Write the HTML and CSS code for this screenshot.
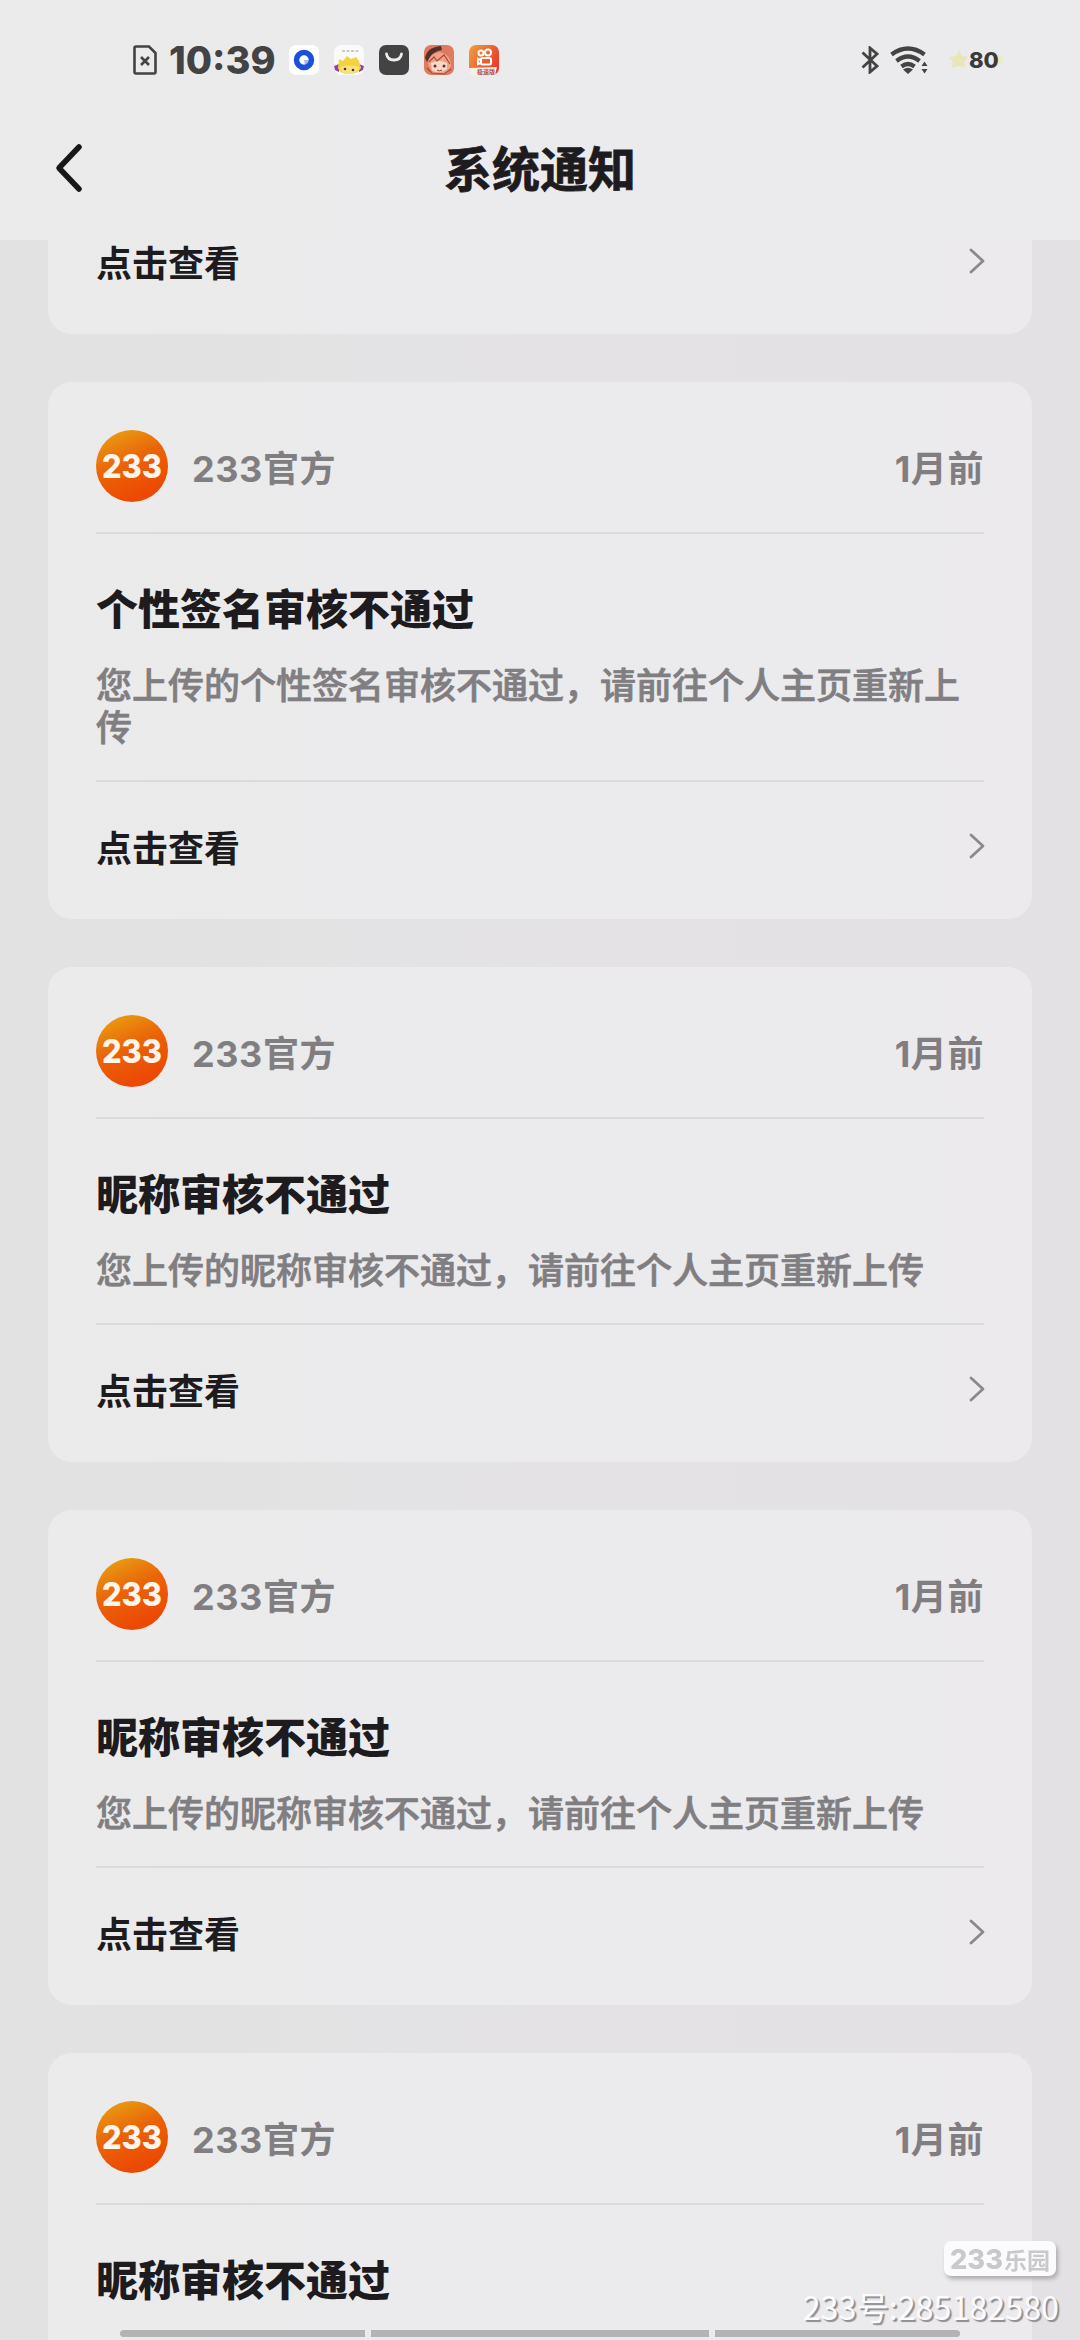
FILE: index.html
```html
<!DOCTYPE html>
<html lang="zh-CN">
<head>
<meta charset="utf-8">
<title>系统通知</title>
<link rel="stylesheet" href="styles.css">
</head>
<body>
<svg class="defs" aria-hidden="true">
  <defs>
    <linearGradient id="orange" x1="0.2" y1="0" x2="0.6" y2="0.9"><stop offset="0" stop-color="#e9a012"/><stop offset=".5" stop-color="#ea6408"/><stop offset="1" stop-color="#ec4a04"/></linearGradient>
    <linearGradient id="video" x1="0" y1="0" x2="1" y2=".6"><stop offset="0" stop-color="#f2a03c"/><stop offset="1" stop-color="#ea3b2c"/></linearGradient>
    <symbol id="chevron" viewBox="0 0 16 26"><path d="M2 2L14 13L2 24" fill="none" stroke="#8b898c" stroke-width="2.8" stroke-linecap="round" stroke-linejoin="round"/></symbol>
    <symbol id="avatar" viewBox="0 0 72 72"><circle cx="36" cy="36" r="36" fill="url(#orange)"/><text x="6" y="47.500" textLength="60" lengthAdjust="spacingAndGlyphs" class="avatar-text">233</text></symbol>
  </defs>
</svg>
<div class="screen">
  <header class="top">
    <div class="status">
      <svg class="doc" viewBox="0 0 24 30"><path d="M3 1.500H16L22.500 8V27Q22.500 28.500 21 28.500H3Q1.500 28.500 1.500 27V3Q1.500 1.500 3 1.500Z" fill="none" stroke="#434343" stroke-width="2.600"/><path d="M8 12L16 20M16 12L8 20" stroke="#434343" stroke-width="2.600"/></svg>
      <span class="time">10:39</span>
      <div class="apps">
        <svg viewBox="0 0 30 30"><rect width="30" height="30" rx="7" fill="#fff"/><circle cx="15" cy="15" r="7.500" fill="none" stroke="#1b50dc" stroke-width="5.500"/><path d="M15 15H20V20H16Z" fill="#1b50dc" opacity=".4"/></svg>
        <svg viewBox="0 0 30 30"><rect width="30" height="30" rx="7" fill="#fafafa"/><path d="M8 6H25" stroke="#c9c9d2" stroke-width="2" stroke-dasharray="3 1.500"/><path d="M0 21L5 19V27L1 25ZM30 21L25 19V27L29 25Z" fill="#8c43b4"/><path d="M5 14L9 16L13 11L17 14L22 12L25 16L27 23Q24 29 15 29Q6 29 4 23Z" fill="#f3d43e"/><path d="M6 22Q15 19 25 22Q23 29 15 29Q7 29 6 22Z" fill="#f8e27c"/><circle cx="11" cy="24" r="1.300" fill="#453438"/><circle cx="19" cy="25" r="1.300" fill="#453438"/></svg>
        <svg viewBox="0 0 30 30"><rect width="30" height="30" rx="7" fill="#434343"/><path d="M7.500 9Q8.500 15 15 15Q21.500 15 22.500 9" fill="none" stroke="#eee" stroke-width="2.800" stroke-linecap="round"/></svg>
        <svg viewBox="0 0 30 30"><rect width="30" height="30" rx="7" fill="#df7a5d"/><path d="M1 13Q3 2 17 1L18 5Q8 6 3 17Z" fill="#54302d"/><path d="M4 19Q5 9 15 7Q27 9 27 21L23 28H8Z" fill="#f2a187"/><path d="M7 18Q15 14 23 18V24Q15 30 8 25Z" fill="#f8d8c8"/><path d="M5 17L10 12L13 16L20 10L26 19M3 23L8 28L20 29L27 24" fill="none" stroke="#a34a3d" stroke-width="1.200"/><circle cx="11" cy="21" r="1.500" fill="#59312d"/><circle cx="20" cy="21" r="1.500" fill="#59312d"/><path d="M13 25Q15 27 18 25" fill="none" stroke="#833e36"/></svg>
        <svg viewBox="0 0 30 30"><rect width="30" height="30" rx="7" fill="url(#video)"/><g fill="none" stroke="#fff" stroke-width="2"><circle cx="12" cy="8" r="2.500"/><circle cx="19" cy="7.500" r="3"/><rect x="12" y="13" width="10" height="6.500" rx="1.500"/><path d="M12 15L9 14V19L12 18"/></g><path d="M0 23L28 22L26 30H5Q0 30 0 23Z" fill="#fbeee8"/><text x="8" y="28.500" class="tiny">极速版</text></svg>
      </div>
      <div class="signals">
        <svg class="bt" viewBox="0 0 18 28"><path d="M1.500 6.500L16 20L9 26V2L16 8L1.500 21.500" fill="none" stroke="#434343" stroke-width="2.800"/></svg>
        <svg class="wifi" viewBox="0 0 39 28"><g fill="none" stroke="#434343" stroke-width="4.200"><path d="M1.500 8.500Q18 -3.500 34.500 8.500"/><path d="M6.500 15Q18 6 29.500 15"/><path d="M11.500 20.500Q18 15.500 24.500 20.500"/></g><path d="M13 23.500Q18 20 23 23.500L18 28Z" fill="#434343"/><path d="M31.500 20L34.500 15.500L37.500 20ZM31.500 23L34.500 27.500L37.500 23Z" fill="#434343"/></svg>
        <div class="battery">
          <svg class="spark" viewBox="0 0 56 24"><path d="M10 2L13 8L19 9L15 14L16 20L10 18L3 20L4 14L0 9L7 8Z" fill="#e8e6b8"/><path d="M51 6L55 11L51 17L48 14V9Z" fill="#ecebc8"/></svg>
          <span class="battery-text">80</span>
        </div>
      </div>
    </div>
    <nav class="nav">
      <svg class="back" viewBox="0 0 30 50"><path d="M26 4L6 25L26 46" fill="none" stroke="#171717" stroke-width="5.500" stroke-linecap="round" stroke-linejoin="round"/></svg>
      <h1 class="page-title">系统通知</h1>
    </nav>
  </header>
  <main class="list">
    <section class="card card-first">
      <div class="action"><span>点击查看</span><svg class="chev"><use href="#chevron"/></svg></div>
    </section>
    <section class="card">
      <div class="sender"><svg class="avatar"><use href="#avatar"/></svg><span class="name">233官方</span><span class="date">1月前</span></div>
      <div class="message"><h2>个性签名审核不通过</h2><p>您上传的个性签名审核不通过，请前往个人主页重新上传</p></div>
      <div class="action"><span>点击查看</span><svg class="chev"><use href="#chevron"/></svg></div>
    </section>
    <section class="card">
      <div class="sender"><svg class="avatar"><use href="#avatar"/></svg><span class="name">233官方</span><span class="date">1月前</span></div>
      <div class="message"><h2>昵称审核不通过</h2><p>您上传的昵称审核不通过，请前往个人主页重新上传</p></div>
      <div class="action"><span>点击查看</span><svg class="chev"><use href="#chevron"/></svg></div>
    </section>
    <section class="card">
      <div class="sender"><svg class="avatar"><use href="#avatar"/></svg><span class="name">233官方</span><span class="date">1月前</span></div>
      <div class="message"><h2>昵称审核不通过</h2><p>您上传的昵称审核不通过，请前往个人主页重新上传</p></div>
      <div class="action"><span>点击查看</span><svg class="chev"><use href="#chevron"/></svg></div>
    </section>
    <section class="card card-last">
      <div class="sender"><svg class="avatar"><use href="#avatar"/></svg><span class="name">233官方</span><span class="date">1月前</span></div>
      <div class="message"><h2>昵称审核不通过</h2></div>
    </section>
  </main>
  <div class="gesture"><i></i><i></i><i></i></div>
  <div class="stamp">
    <svg class="stamp-logo" viewBox="0 0 112 35"><rect width="112" height="35" rx="7" fill="#fbfafc"/><text x="6" y="28" textLength="53" lengthAdjust="spacingAndGlyphs" class="stamp-num">233</text><text x="60" y="27.500" textLength="46" lengthAdjust="spacingAndGlyphs" class="stamp-cn">乐园</text></svg>
    <span class="stamp-id">233号:285182580</span>
  </div>
</div>
</body>
</html>
```

FILE: styles.css
```css
* { box-sizing: border-box; }
body { margin: 0; font-family: Inter, "Noto Sans CJK SC", sans-serif; color: #1d1b1e; }
h1, h2, p { margin: 0; }
svg { display: block; flex: none; }
.defs { position: absolute; width: 0; height: 0; }
.screen { position: relative; width: 1080px; height: 2340px; overflow: hidden; background: linear-gradient(90deg, #e2e2e2 0, #e3e2e4 35%, #e3e1e4 100%); }
.top { height: 240px; background: linear-gradient(90deg, #ebebeb 0, #ebeaec 35%, #ebeaec 100%); }
.status { display: flex; align-items: center; height: 120px; padding: 0 75px 0 133px; }
.doc { width: 24px; height: 30px; }
.time { width: 110px; margin-left: 12px; font-size: 38px; font-weight: 800; line-height: 40px; color: #434343; white-space: nowrap; }
.apps { display: flex; gap: 15px; margin-left: 10px; }
.apps svg { width: 30px; height: 30px; }
.tiny { font-size: 6px; font-weight: 700; fill: #a95345; }
.signals { display: flex; align-items: center; margin-left: auto; }
.bt { width: 18px; height: 28px; }
.wifi { width: 39px; height: 28px; margin-left: 11px; }
.battery { display: grid; width: 56px; height: 30px; margin-left: 20px; align-items: center; }
.battery > * { grid-area: 1 / 1; }
.spark { width: 56px; height: 24px; }
.battery-text { padding-left: 20px; font-size: 22px; font-weight: 800; line-height: 28px; color: #3b3a38; }
.nav { display: grid; grid-template-columns: 1fr auto 1fr; align-items: center; height: 100px; padding: 0 53px; }
.back { width: 30px; height: 50px; margin-bottom: 5px; }
.page-title { font-size: 48px; font-weight: 700; line-height: 60px; -webkit-text-stroke: 0.8px #1d1b1e; }
.list { display: flex; flex-direction: column; gap: 48px; }
.card { flex: none; margin: 0 48px; padding: 0 48px; border-radius: 24px; background: linear-gradient(90deg, #ebebeb 0, #ebeaec 30%, #eceaed 100%); }
.card-first { height: 94px; border-radius: 0 0 24px 24px; overflow: hidden; display: flex; flex-direction: column; justify-content: flex-end; }
.sender { display: flex; align-items: center; height: 152px; border-bottom: 2px solid #dad9db; color: #807e81; font-size: 36px; font-weight: 700; }
.avatar { width: 72px; height: 72px; margin-top: 18px; }
.avatar-text { font-size: 32px; font-weight: 800; fill: #fff5eb; }
.name { margin: 18px 0 0 24px; letter-spacing: 0.6px; }
.date { margin: 18px 0 0 auto; letter-spacing: 0.6px; }
.message { padding: 48px 0 31px; border-bottom: 2px solid #dad9db; }
.message h2 { font-size: 42px; font-weight: 800; line-height: 56px; }
.message p { margin-top: 27px; font-size: 36px; font-weight: 500; line-height: 42px; color: #807e81; -webkit-text-stroke: 0.7px #807e81; }
.action { display: flex; flex: none; align-items: center; justify-content: space-between; height: 137px; padding-bottom: 4px; font-size: 36px; font-weight: 700; line-height: 44px; }
.chev { width: 16px; height: 26px; margin: 0 -1px 6px 0; }
.card-last { height: 360px; }
.gesture { position: absolute; left: 120px; bottom: 3px; display: flex; gap: 6px; }
.gesture i { width: 245px; height: 7px; border-radius: 4px 0 0 4px; background: #b4b2b5; }
.gesture i:nth-child(2) { width: 338px; border-radius: 0; }
.gesture i:last-child { border-radius: 0 4px 4px 0; }
.stamp { position: absolute; right: 21px; bottom: 15px; display: flex; flex-direction: column; align-items: flex-end; gap: 11px; }
.stamp-logo { width: 112px; height: 35px; margin-right: 3px; filter: drop-shadow(2px 3px 2px #aaa9ac); }
.stamp-num { font-size: 27px; font-weight: 800; fill: #c9c8ca; }
.stamp-cn { font-size: 23px; font-weight: 700; fill: #c9c8ca; }
.stamp-id { font-family: "Noto Sans CJK SC", sans-serif; font-size: 32.3px; line-height: 38px; color: #fbfafc; text-shadow: 2px 2px 1px #8e8d90; white-space: nowrap; }
```
